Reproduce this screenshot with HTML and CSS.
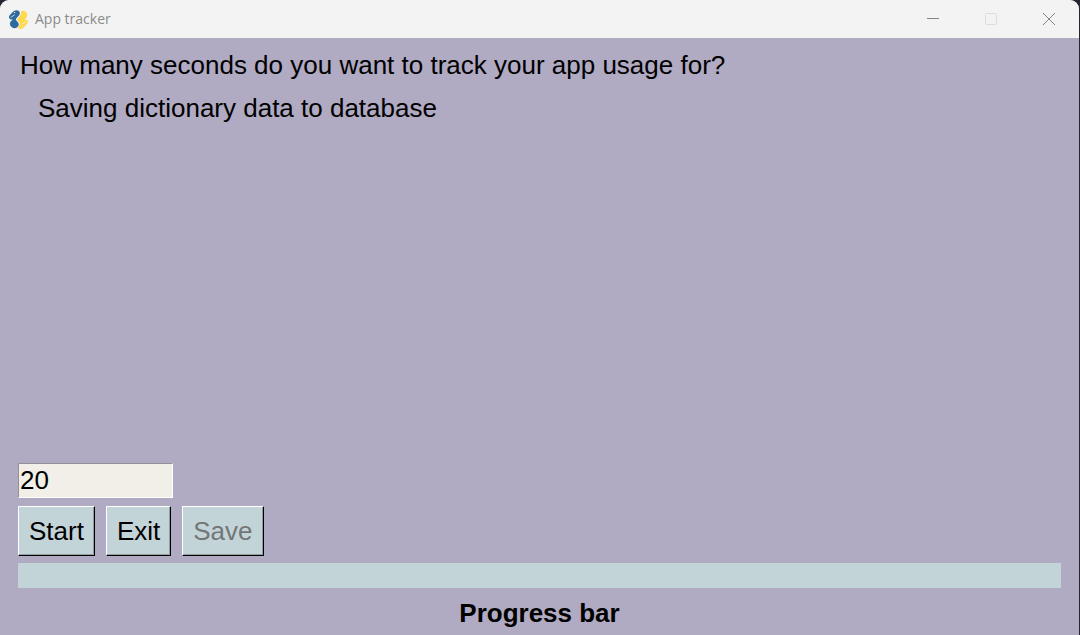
FILE: index.html
```html
<!DOCTYPE html>
<html lang="en">
<head>
<meta charset="utf-8">
<title>App tracker</title>
<link rel="stylesheet" href="styles.css">
</head>
<body>
<div class="window">
  <header class="titlebar">
    <svg class="logo" viewBox="0 0 20 20" aria-hidden="true">
      <path fill="#2f6a9f" d="M1.200 6.500L5.500 2Q8 .3 10.500 1.800Q12 3.500 10.800 5.800L7.800 9Q7 10 8 11L9.800 13Q11 14.800 9.500 16.700Q7.500 19 5 18Q2 17 1.800 14Q1.800 12.200 3.500 11L5 9.600Q2.500 10.800 1.300 9Q.6 7.500 1.200 6.500Z"/>
      <path fill="#ffd94a" d="M18.900 13.200L14.700 18Q12 19.700 9.800 18.300Q9 17.500 10.500 16.300Q12 14.500 10.800 12.700L9.200 10.800Q8.500 10 9.300 9.100L12 6Q13 4 12 2.200Q14.500 .8 17 2.500Q19 4.500 18.200 7Q17.500 8.500 15.500 10.300Q17.700 9.300 18.800 11Q19.400 12.200 18.900 13.200Z"/>
      <path fill="none" stroke="#f3f3f3" stroke-width=".7" d="M2.500 8L6.500 5.500M13.500 14.500L17.500 12"/>
      <circle cx="6.300" cy="3.300" r=".6" fill="#f3f3f3"/>
      <circle cx="13.500" cy="16.800" r=".6" fill="#f3f3f3"/>
    </svg>
    <h1 class="title">App tracker</h1>
    <div class="controls">
      <button class="control" type="button" aria-label="Minimize">
        <svg class="glyph" viewBox="0 0 12 12"><path d="M0 5.500H12"/></svg>
      </button>
      <button class="control" type="button" aria-label="Maximize" disabled>
        <svg class="glyph" viewBox="0 0 12 12"><rect x=".5" y=".5" width="11" height="11" rx="1"/></svg>
      </button>
      <button class="control" type="button" aria-label="Close">
        <svg class="glyph" viewBox="0 0 12 12"><path d="M0 0L12 12M12 0L0 12"/></svg>
      </button>
    </div>
  </header>
  <main class="content">
    <label class="question" for="seconds">How many seconds do you want to track your app usage for?</label>
    <p class="status">Saving dictionary data to database</p>
    <input class="seconds" id="seconds" type="text" value="20">
    <div class="actions">
      <button class="action" type="button">Start</button>
      <button class="action" type="button">Exit</button>
      <button class="action" type="button" disabled>Save</button>
    </div>
    <div class="progress" role="progressbar" aria-labelledby="progress-label" aria-valuemin="0" aria-valuemax="100" aria-valuenow="0"></div>
    <p class="progress-label" id="progress-label">Progress bar</p>
  </main>
</div>
</body>
</html>
```
FILE: styles.css
```css
* {
  box-sizing: border-box;
}

body {
  margin: 0;
  background: #272530;
  color: #000;
  font: 26px/30px "Liberation Sans", Arial, sans-serif;
}

.window {
  display: flex;
  flex-direction: column;
  min-height: 100vh;
  margin-right: 1px;
  border-radius: 9px 9px 0 0;
  overflow: hidden;
  background: #b0aac2;
}

.titlebar {
  display: flex;
  align-items: center;
  height: 38px;
  padding-left: 8px;
  background: #f3f3f3;
}

.logo {
  width: 21px;
  height: 21px;
}

.title {
  margin: 0 0 0 6px;
  color: #8b8b8b;
  font: 14px/20px "Open Sans", sans-serif;
}

.controls {
  display: flex;
  align-self: stretch;
  margin-left: auto;
  padding-right: 1px;
}

.control {
  display: flex;
  align-items: center;
  justify-content: center;
  width: 58px;
  padding: 0;
  border: 0;
  background: none;
  color: #858585;
}

.control:disabled {
  color: #dcdcdc;
}

.glyph {
  width: 12px;
  height: 12px;
  fill: none;
  stroke: currentColor;
}

.content {
  display: flex;
  flex: 1;
  flex-direction: column;
  align-items: flex-start;
  padding: 12px 18px 7px;
}

.question {
  padding-left: 2px;
}

.status {
  margin: 13px 0 0;
  padding-left: 20px;
}

.seconds {
  width: 155px;
  height: 35px;
  margin-top: auto;
  padding: 0 1px;
  border: 1px solid;
  border-color: #929199 #fff #fff #929199;
  border-radius: 0;
  outline: 0;
  background: #f2efe8;
  color: inherit;
  font: inherit;
}

.actions {
  display: flex;
  gap: 11px;
  margin-top: 8px;
}

.action {
  height: 50px;
  padding: 0 10px;
  border: 1px solid;
  border-color: #fff #000 #000 #fff;
  border-radius: 0;
  background: #c3d4d8;
  box-shadow: inset -1px -1px #8f9da1;
  color: #000;
  font: inherit;
}

.action:disabled {
  color: #737677;
}

.progress {
  align-self: stretch;
  height: 25px;
  margin-top: 7px;
  background: #c3d4d8;
}

.progress-label {
  align-self: center;
  margin: 10px 0 0;
  font-weight: bold;
}
```
